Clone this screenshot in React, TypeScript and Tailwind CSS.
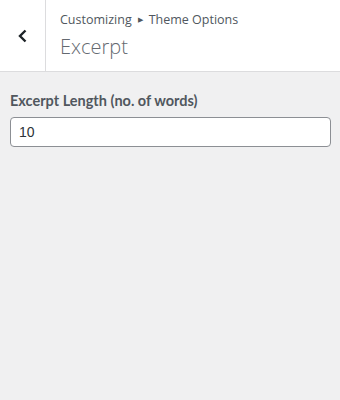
export default function App() {
  return (
    <div className="w-[340px] h-[400px] bg-[#f0f0f1] font-['Open_Sans',sans-serif] text-[#50575e]">
      <div className="flex h-[72px] bg-white border-b border-[#dcdcde]">
        <button className="w-[46px] shrink-0 flex items-center justify-center border-r border-[#dcdcde] text-[#1d2327]">
          <svg width="12" height="14" viewBox="0 0 12 14" fill="none">
            <path d="M8.5 1.5 3 7l5.5 5.5" stroke="currentColor" strokeWidth="2.4" />
          </svg>
        </button>
        <div className="flex flex-col pl-[14px] pt-[11px]">
          <div className="flex items-center text-[12.5px] leading-[18px]">
            Customizing
            <span className="mx-[6px] text-[7px] text-[#50575e]">&#9654;</span>
            Theme Options
          </div>
          <div className="text-[20px] leading-[28px] font-light text-[#646970] mt-[4px]">
            Excerpt
          </div>
        </div>
      </div>
      <div className="px-[10px] pt-[19px]">
        <label className="block text-[14.5px] leading-[20px] font-bold text-[#50575e] mb-[6px] font-['Lato',sans-serif]">
          Excerpt Length (no. of words)
        </label>
        <input
          type="text"
          defaultValue="10"
          className="w-[321px] h-[30px] px-[8px] text-[14px] text-[#2c3338] bg-white border border-[#8c8f94] rounded-[4px] outline-none font-['Liberation_Sans',sans-serif]"
        />
      </div>
    </div>
  );
}
